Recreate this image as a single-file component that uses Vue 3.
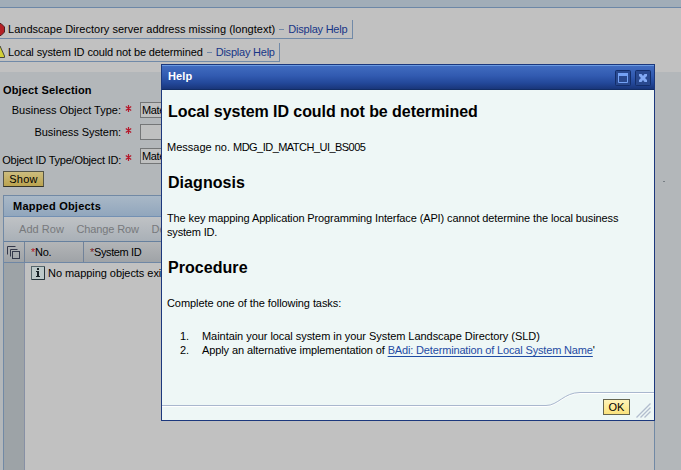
<script setup>
const messages = [
  { kind: 'error', text: 'Landscape Directory server address missing (longtext)' },
  { kind: 'warning', text: 'Local system ID could not be determined' },
]
const fields = [
  { label: 'Business Object Type:', value: 'Mate', cls: 'f1' },
  { label: 'Business System:', value: '', cls: 'f2' },
  { label: 'Object ID Type/Object ID:', value: 'Mate', cls: 'f3' },
]
</script>

<template>
  <div class="page">
    <header class="strip"></header>
    <section class="messages">
      <div v-for="m in messages" :key="m.kind" class="message" :class="m.kind">
        <svg v-if="m.kind === 'error'" class="status" width="5" height="14" viewBox="0 0 5 14">
          <path d="M-6 1.5H1L4.5 5V10L1 13.5H-6Z" fill="#b52025" stroke="#4a2024" />
        </svg>
        <svg v-else class="status" width="5" height="14" viewBox="0 0 5 14">
          <path d="M-5 12.5L0 1L4.5 11V12.5Z" fill="#d3cf36" stroke="#46463a" />
        </svg>
        <span class="mtext">{{ m.text }}</span>
        <i class="dash"></i>
        <a class="help">Display Help</a>
      </div>
    </section>

    <main class="work">
      <h2 class="section-title">Object Selection</h2>
      <div v-for="f in fields" :key="f.label" class="field" :class="f.cls">
        <label><span>{{ f.label }}</span></label>
        <svg class="req" width="7" height="7" viewBox="0 0 7 7"><path d="M3.5 0V7M.8 1.5L6.2 5.5M6.2 1.5L.8 5.5" stroke="#b5182b" stroke-width="1.2" /></svg>
        <div class="input">{{ f.value }}</div>
      </div>
      <button class="show">Show</button>

      <section class="table">
        <div class="caption">Mapped Objects</div>
        <div class="toolbar"><span class="t1">Add Row</span><span class="t2">Change Row</span><span>De</span></div>
        <div class="head">
          <div class="sel">
            <svg width="13" height="13" viewBox="0 0 13 13" fill="none" stroke="#34384a">
              <path d="M.5 8.5V.5H8.5M3.500 10.500V3.500H10.500" /><rect x="5.5" y="5.5" width="7" height="7" />
            </svg>
          </div>
          <div class="no"><b>*</b>No.</div>
          <div class="sys"><b>*</b>System ID</div>
        </div>
        <div class="rows">
          <div class="gutter"></div>
          <div class="empty">
            <svg width="14" height="14" viewBox="0 0 14 14">
              <rect x=".5" y=".5" width="13" height="13" fill="#bdc9c9" stroke="#54656a" />
              <path d="M13.5 1V13.5H1" fill="none" stroke="#26343a" />
              <path d="M6 2H8V4H6ZM5 5H8V10H9V11H5V10H6V6H5Z" fill="#172126" />
            </svg>
            <span>No mapping objects exist</span>
          </div>
        </div>
      </section>
      <i class="speck"></i>
    </main>

    <section class="dialog">
      <div class="titlebar">
        <span>Help</span>
        <div class="winbtns">
          <svg width="16" height="16" viewBox="0 0 16 16">
            <rect x=".5" y=".5" width="15" height="15" rx="1" fill="#29498f" stroke="#132e6b" />
            <path d="M3.5 4V12.5H12.5V4" fill="none" stroke="#74a2f5" /><path d="M3 3H13V6H3Z" fill="#74a2f5" />
          </svg>
          <svg width="16" height="16" viewBox="0 0 16 16">
            <rect x=".5" y=".5" width="15" height="15" rx="1" fill="#29498f" stroke="#132e6b" />
            <path d="M4 4H6.5L8 6L9.500 4H12V6L10 8L12 10V12H9.500L8 10L6.500 12H4V10L6 8L4 6Z" fill="#82aaf5" />
          </svg>
        </div>
      </div>
      <div class="content">
        <h1 class="h-main">Local system ID could not be determined</h1>
        <p class="msgno">Message no. <span>MDG_ID_MATCH_UI_BS005</span></p>
        <h1 class="h-diag">Diagnosis</h1>
        <p class="diag"><span class="d1">The key mapping Application Programming Interface (API) cannot determine the local business</span><br><span class="d2">system ID.</span></p>
        <h1 class="h-proc">Procedure</h1>
        <p class="complete">Complete one of the following tasks:</p>
        <div class="steps">
          <div class="step"><span class="num">1.</span><span class="s1">Maintain your local system in your System Landscape Directory (SLD)</span></div>
          <div class="step"><span class="num">2.</span><span class="s2">Apply an alternative implementation of <a>BAdi: Determination of Local System Name</a>'</span></div>
        </div>
      </div>
      <footer class="foot">
        <svg class="curve" width="492" height="28" viewBox="0 0 492 28" fill="none">
          <path d="M0 15.500H384C396 15.500 402 2.500 418 2.500H492" stroke="#fff" />
          <path d="M0 14.500H384C396 14.500 402 1.500 418 1.500H492" stroke="#a9b7ce" />
        </svg>
        <button class="ok">OK</button>
        <svg class="grip" width="15" height="15" viewBox="0 0 15 15" stroke="#b2bdce" stroke-width="1.4" fill="none">
          <path d="M.5 14.500L14.500 .5M4.500 14.500L14.500 4.500M8.500 14.500L14.500 8.500" />
        </svg>
      </footer>
    </section>
  </div>
</template>

<style>
body { overflow: hidden; }
</style>
<style scoped>
* { box-sizing: border-box; }
.page { position: relative; width: 681px; height: 470px; overflow: hidden; background: #c1c1c1; color: #000; font: 11px/14px "Liberation Sans", Arial, sans-serif; }
.strip { height: 8px; background: #a1adb8; border-bottom: 1px solid #6c87a7; }
.messages { height: 64px; padding-top: 12px; display: flex; flex-direction: column; align-items: flex-start; gap: 4px; }
.message { display: flex; align-items: center; height: 19px; border-right: 1px solid #718aa8; border-bottom: 1px solid #718aa8; white-space: nowrap; }
.error { width: 353px; }
.warning { width: 280px; }
.status { margin-right: 3px; flex: none; }
.mtext { flex: none; letter-spacing: .025px; }
.warning .mtext { letter-spacing: -.12px; }
.dash { width: 5px; height: 1px; background: #7188a8; margin: 0 4px; flex: none; }
.help { color: #183687; letter-spacing: -.22px; }
.work { height: 398px; background: #b3b7ba; padding: 11px 0 0 3px; display: flex; flex-direction: column; align-items: flex-start; position: relative; }
h1, h2, p { margin: 0; }
.section-title { font-size: 11px; line-height: 14px; height: 19px; letter-spacing: .16px; }
.field { height: 17px; display: flex; align-items: center; flex: none; }
.f2 { margin-top: 5px; }
.f3 { margin-top: 7px; }
.field label { width: 118px; text-align: right; white-space: nowrap; display: flex; justify-content: flex-end; }
.f1 label { padding-bottom: 1px; }
.f2 label { padding-bottom: 1px; letter-spacing: -.06px; }
.f3 label { padding-top: 6px; letter-spacing: -.23px; }
.req { margin: 0 8px 5px 4px; }
.f3 .req { margin-bottom: -1px; }
.input { width: 250px; height: 16px; border: 1px solid #747677; background: #bfc0c0; padding-left: 1px; line-height: 14px; align-self: flex-start; letter-spacing: -.35px; }
button { font: inherit; padding: 0; color: #000; }
.show { flex: none; width: 41px; height: 16px; margin-top: 6px; line-height: 13px; letter-spacing: .2px; background: linear-gradient(#cdbd7e, #bba34f); border: 1px solid #555547; border-bottom-color: #333329; }
.table { width: 652px; flex: 1; min-height: 0; margin-top: 8px; border: 1px solid #7189a5; border-bottom: 0; background: #c1c1c1; display: flex; flex-direction: column; }
.caption { height: 21px; padding: 3px 0 0 9px; font-weight: bold; line-height: 14px; letter-spacing: .22px; border-bottom: 1px solid #7390b3; background: linear-gradient(#a9b8c7, #91a6bd); flex: none; }
.toolbar { height: 25px; padding: 5px 0 0 15px; display: flex; color: #77797c; background: linear-gradient(#bfc2c5, #a9b0b7); border-bottom: 1px solid #66809e; flex: none; white-space: nowrap; }
.t1 { width: 57.5px; letter-spacing: .05px; }
.t2 { width: 75px; letter-spacing: -.13px; }
.head { height: 21px; display: flex; background: linear-gradient(#b3b5b7, #9fa3a7); border-bottom: 1px solid #6f87a5; line-height: 20px; flex: none; }
.head b { color: #b5182b; font-weight: normal; }
.sys b { color: #7b1822; }
.sel { width: 21px; border-right: 1px solid #718299; padding: 4px 0 0 3px; line-height: 0; }
.no { width: 59px; border-right: 1px solid #718299; padding-left: 6px; letter-spacing: -.3px; }
.sys { padding-left: 6px; letter-spacing: -.37px; }
.rows { flex: 1; display: flex; }
.gutter { width: 21px; background: #9da3a7; border-right: 1px solid #8790a5; }
.empty { padding: 3px 0 0 6px; height: 18px; display: flex; gap: 3px; line-height: 14px; white-space: nowrap; letter-spacing: -.05px; }
.empty svg { flex: none; }
.speck { position: absolute; left: 663px; top: 109px; width: 2px; height: 1px; background: #777e84; }

.dialog { position: absolute; left: 161px; top: 64px; width: 494px; height: 357px; border: 1px solid #1c387d; background: #eef7f6; display: flex; flex-direction: column; }
.titlebar { height: 25px; flex: none; padding: 0 3px 0 6px; display: flex; justify-content: space-between; align-items: center; color: #fff; font-weight: bold; letter-spacing: .15px; background: linear-gradient(#6a9ae0 0 1px, #416cc0 1px, #315ab0 11px, #23489a 18px, #19367a 24px, #122d65 24px); }
.titlebar span { padding-bottom: 3px; }
.winbtns { display: flex; gap: 4px; }
.content { padding: 0 6px 0 5px; flex: 1; white-space: nowrap; }
h1 { font-size: 16px; line-height: 20px; padding-left: 1px; }
.h-main { padding-top: 12px; height: 32px; letter-spacing: -.06px; }
.msgno { margin-top: 18px; }
.msgno span { letter-spacing: -.53px; }
.h-diag { margin-top: 19px; letter-spacing: .06px; }
.diag { margin-top: 18px; letter-spacing: -.12px; }
.d2 { letter-spacing: -.18px; }
.h-proc { margin-top: 19px; letter-spacing: .05px; }
.complete { margin-top: 18px; letter-spacing: -.07px; }
.steps { margin-top: 19px; }
.step { display: flex; }
.num { width: 35px; padding-left: 13px; }
.s1 { letter-spacing: -.05px; }
.s2 { letter-spacing: -.1px; }
.step a { color: #1e4ba3; text-decoration: underline; text-underline-offset: 2px; letter-spacing: -.16px; }
.foot { height: 28px; position: relative; flex: none; display: flex; justify-content: flex-end; align-items: flex-start; padding: 7px 3px 0 0; gap: 6px; }
.curve { position: absolute; left: 0; top: -1px; }
.ok { position: relative; width: 27px; height: 16px; line-height: 13px; background: linear-gradient(#fff3b8, #fbe27c); border: 1px solid #65654f; }
.grip { margin-top: 4px; }
</style>
